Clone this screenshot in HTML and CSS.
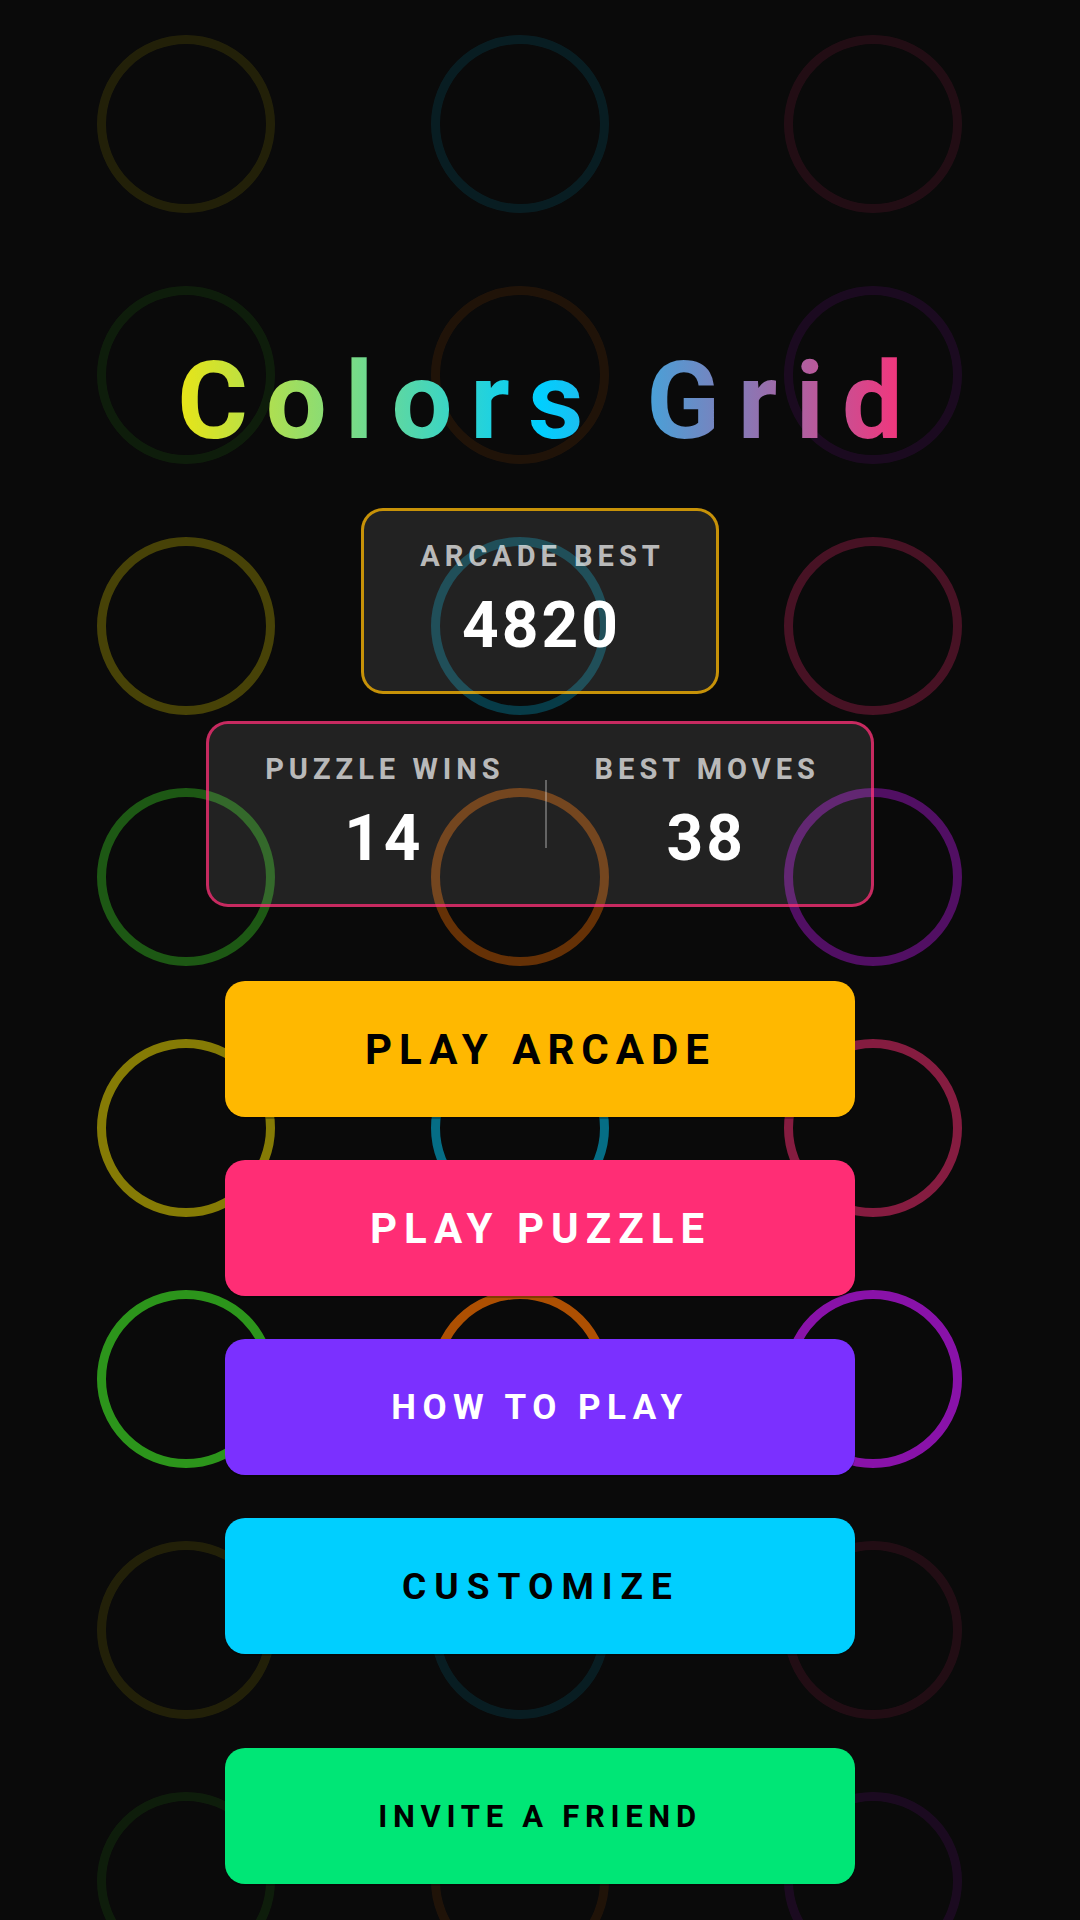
FILE: index.html
```html
<!DOCTYPE html>
<html lang="en">
<head>
<meta charset=utf-8>
<title>Colors Grid</title>
<link rel="stylesheet" href="styles.css">
</head>
<body>
  <div class="rings">
    <div class="ring-row r1"><span class="ring yellow"></span><span class="ring cyan"></span><span class="ring pink"></span></div>
    <div class="ring-row r2"><span class="ring green"></span><span class="ring orange"></span><span class="ring purple"></span></div>
    <div class="ring-row r3"><span class="ring yellow"></span><span class="ring cyan"></span><span class="ring pink"></span></div>
    <div class="ring-row r4"><span class="ring green"></span><span class="ring orange"></span><span class="ring purple"></span></div>
    <div class="ring-row r5"><span class="ring yellow"></span><span class="ring cyan"></span><span class="ring pink"></span></div>
    <div class="ring-row r6"><span class="ring green"></span><span class="ring orange"></span><span class="ring purple"></span></div>
    <div class="ring-row r7"><span class="ring yellow"></span><span class="ring cyan"></span><span class="ring pink"></span></div>
    <div class="ring-row r8"><span class="ring green"></span><span class="ring orange"></span><span class="ring purple"></span></div>
  </div>

  <main class="menu">
    <h1 class="title">Colors Grid</h1>

    <div class="stat-card arcade">
      <div class="stat">
        <div class="stat-label">ARCADE BEST</div>
        <div class="stat-value">4820</div>
      </div>
    </div>

    <div class="stat-card puzzle">
      <div class="stat">
        <div class="stat-label">PUZZLE WINS</div>
        <div class="stat-value">14</div>
      </div>
      <div class="divider"></div>
      <div class="stat">
        <div class="stat-label">BEST MOVES</div>
        <div class="stat-value">38</div>
      </div>
    </div>

    <nav class="buttons">
      <button class="btn btn-arcade">PLAY ARCADE</button>
      <button class="btn btn-puzzle">PLAY PUZZLE</button>
      <button class="btn btn-help">HOW TO PLAY</button>
      <button class="btn btn-custom">CUSTOMIZE</button>
      <button class="btn btn-invite">INVITE A FRIEND</button>
    </nav>
  </main>
</body>
</html>
```

FILE: styles.css
```css
html, body { margin: 0; padding: 0; }
body { background: #0a0a0a; font-family: Roboto, "Liberation Sans", sans-serif; width: 1080px; height: 1920px; overflow: hidden; position: relative; }

/* background rings */
.rings { position: absolute; inset: 0; z-index: 0; padding-top: 35px; display: flex; flex-direction: column; gap: 73px; }
.ring-row { display: flex; padding-left: 97px; }
.ring { display: block; width: 178px; height: 178px; box-sizing: border-box; border: 9px solid; border-radius: 50%; }
.ring:nth-child(2) { margin-left: 156px; }
.ring:nth-child(3) { margin-left: 175px; }
.yellow { border-color: #ffeb00; }
.cyan { border-color: #00cfff; }
.pink { border-color: #ff2d75; }
.green { border-color: #3acc22; }
.orange { border-color: #ee6c00; }
.purple { border-color: #bb16e8; }
.r1 .ring, .r2 .ring, .r7 .ring, .r8 .ring { opacity: 0.1; }
.r3 .ring { opacity: 0.25; }
.r4 .ring { opacity: 0.4; }
.r5 .ring { opacity: 0.5; }
.r6 .ring { opacity: 0.72; }

/* menu */
.menu { position: relative; z-index: 1; display: flex; flex-direction: column; align-items: center; padding-top: 338px; }
.title { margin: 0; font-size: 108px; font-weight: 700; line-height: normal; letter-spacing: 18px; padding-left: 18px; display: inline-block;
  background: linear-gradient(90deg, #f5e60a 0%, #00cfff 50%, #ff2d75 100%);
  -webkit-background-clip: text; background-clip: text; color: transparent; }

.stat-card { box-sizing: border-box; height: 186px; background: rgba(255,255,255,0.1); border: 3px solid; border-radius: 22px; display: flex; justify-content: center; align-items: center; }
.arcade { width: 358px; margin-top: 44px; border-color: rgba(255,184,0,0.75); }
.puzzle { width: 668px; margin-top: 27px; border-color: rgba(255,45,117,0.75); }
.stat { text-align: center; }
.stat-label { font-size: 29px; line-height: 34px; font-weight: 700; letter-spacing: 5px; padding-left: 5px; color: rgba(255,255,255,0.7); }
.stat-value { font-size: 64px; line-height: 75px; font-weight: 700; letter-spacing: 3px; padding-left: 3px; color: #fff; margin-top: 15px; }
.divider { width: 2px; height: 68px; background: rgba(255,255,255,0.3); margin: 0 43px 0 40px; }

/* buttons */
.buttons { display: flex; flex-direction: column; gap: 43px; margin-top: 74px; }
.btn { width: 630px; height: 136px; border: 0; border-radius: 20px; font-family: Roboto, "Liberation Sans", sans-serif; font-weight: 700; cursor: pointer; box-shadow: 0 2px 0 rgba(0,0,0,0.25); }
.btn-arcade { background: #ffb800; color: #000; font-size: 42px; letter-spacing: 7px; padding-left: 7px; }
.btn-puzzle { background: #ff2d75; color: #fff; font-size: 42px; letter-spacing: 7px; padding-left: 7px; }
.btn-help { background: #7b30ff; color: #fff; font-size: 35px; letter-spacing: 6.5px; padding-left: 6px; }
.btn-custom { background: #00cfff; color: #000; font-size: 37px; letter-spacing: 8px; padding-left: 8px; }
.btn-invite { background: #00e676; color: #000; font-size: 31px; letter-spacing: 5.7px; padding-left: 6px; margin-top: 51px; }
```
